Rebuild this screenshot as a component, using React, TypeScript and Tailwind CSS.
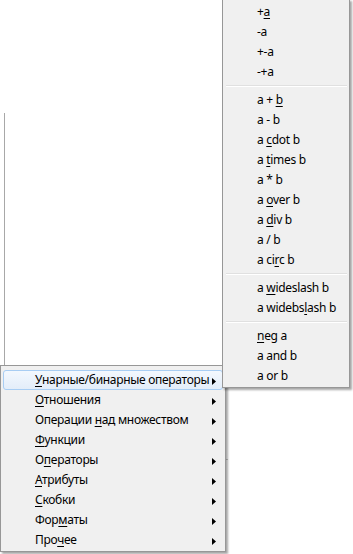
const font = { fontFamily: '"Segoe UI", "Noto Sans", "DejaVu Sans", sans-serif' };

type Item = { pre: string; u: string; post: string; sub?: boolean } | "sep";

const mainItems: Item[] = [
  { pre: "", u: "У", post: "нарные/бинарные операторы", sub: true },
  { pre: "", u: "О", post: "тношения", sub: true },
  { pre: "Операции ", u: "н", post: "ад множеством", sub: true },
  { pre: "", u: "Ф", post: "ункции", sub: true },
  { pre: "О", u: "п", post: "ераторы", sub: true },
  { pre: "", u: "А", post: "трибуты", sub: true },
  { pre: "", u: "С", post: "кобки", sub: true },
  { pre: "Фор", u: "м", post: "аты", sub: true },
  { pre: "Про", u: "ч", post: "ее", sub: true },
];

const subItems: Item[] = [
  { pre: "+", u: "a", post: "" },
  { pre: "-a", u: "", post: "" },
  { pre: "+-a", u: "", post: "" },
  { pre: "-+a", u: "", post: "" },
  "sep",
  { pre: "a + ", u: "b", post: "" },
  { pre: "a - b", u: "", post: "" },
  { pre: "a ", u: "c", post: "dot b" },
  { pre: "a ", u: "t", post: "imes b" },
  { pre: "a * b", u: "", post: "" },
  { pre: "a ", u: "o", post: "ver b" },
  { pre: "a ", u: "d", post: "iv b" },
  { pre: "a / b", u: "", post: "" },
  { pre: "a ci", u: "r", post: "c b" },
  "sep",
  { pre: "a ", u: "w", post: "ideslash b" },
  { pre: "a widebs", u: "l", post: "ash b" },
  "sep",
  { pre: "", u: "n", post: "eg a" },
  { pre: "a and b", u: "", post: "" },
  { pre: "a or b", u: "", post: "" },
];

const Arrow = () => (
  <svg width="4" height="7" viewBox="0 0 4 7" className="absolute right-[6px] top-[7px]">
    <path d="M0 0 L4 3.5 L0 7 Z" fill="#000" />
  </svg>
);

const Row = ({ item, active }: { item: Item; active?: boolean }) => {
  if (item === "sep")
    return (
      <div className="h-[8px] flex flex-col justify-center pl-[1px]">
        <div className="h-px bg-[#e0e0e0]" />
        <div className="h-px bg-white" />
      </div>
    );
  return (
    <div
      className={`relative h-[20px] flex items-center pl-[31px] text-[12px] tracking-[-0.3px] leading-none text-black rounded-[3px] border ${
        active ? "border-[#a8cdf3] bg-gradient-to-b from-[#f3f8fe] to-[#e3edf9]" : "border-transparent"
      }`}
    >
      <span className="whitespace-pre">
        {item.pre}
        {item.u && <span className="underline underline-offset-2">{item.u}</span>}
        {item.post}
      </span>
      {item.sub && <Arrow />}
    </div>
  );
};

const Menu = ({ items, className, activeIndex }: { items: Item[]; className: string; activeIndex?: number }) => (
  <div
    className={`absolute bg-[#f0f0f0] border border-[#979797] shadow-[2px_2px_2px_rgba(0,0,0,0.35)] px-[2px] ${className}`}
    style={font}
  >
    <div className="flex flex-col">
      {items.map((it, i) => (
        <Row key={i} item={it} active={i === activeIndex} />
      ))}
    </div>
  </div>
);

export default function App() {
  return (
    <div className="relative w-[353px] h-[554px] bg-white overflow-hidden">
      <div className="absolute left-[4px] top-[113px] h-[252px] w-px bg-[#a8a8a8]" />
      <div className="absolute left-[225px] top-[459px] w-[3px] h-px bg-[#c8c8c8]" />
      <Menu items={mainItems} activeIndex={0} className="left-0 top-[365px] w-[226px] h-[187px] pt-[4px]" />
      <Menu items={subItems} className="left-[222px] top-[-1px] w-[128px] h-[389px] pt-[2px]" />
    </div>
  );
}
